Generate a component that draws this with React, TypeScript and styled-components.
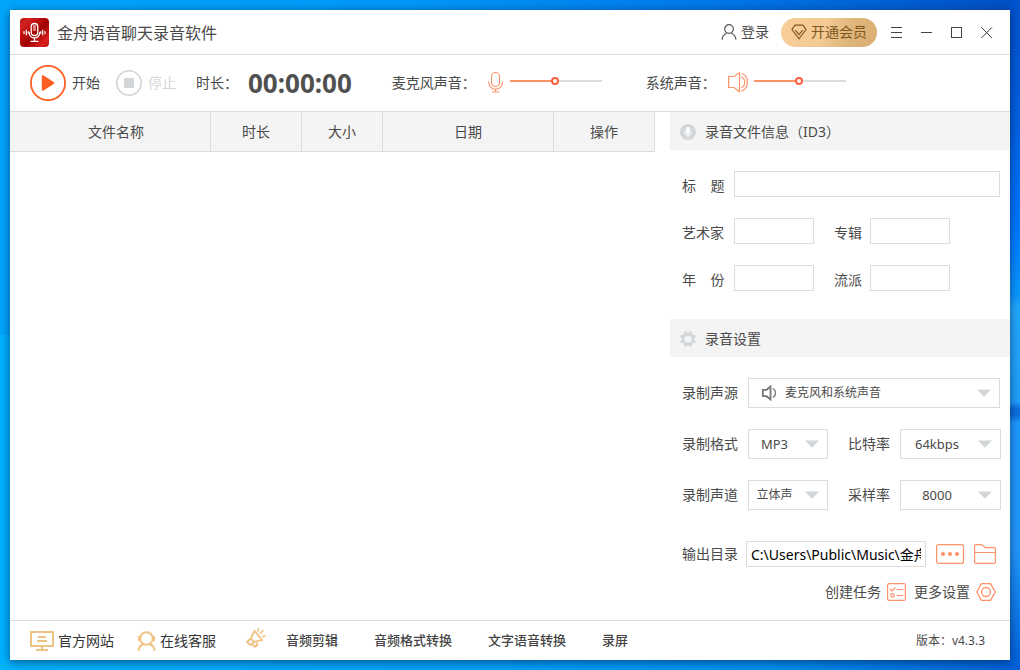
import React, { useState } from 'react';
import styled, { createGlobalStyle } from 'styled-components';

const color = {
  text: '#4a4a4a',
  line: '#dcdcdc',
  panel: '#f4f4f4',
  orange: '#ff9169',
  strong: '#ff6022',
  muted: '#d2d6d9',
  gold: '#edc283',
};

const GlobalStyle = createGlobalStyle`
  *, *::before, *::after { box-sizing: border-box; }
  body {
    margin: 0;
    color: ${color.text};
    font: 14px/20px "Noto Sans", "Noto Sans CJK SC", sans-serif;
  }
  button, input, select { font: inherit; color: inherit; }
  svg { display: block; flex: none; }
`;

const Desktop = styled.div`
  min-height: 100vh;
  padding: 10px;
  display: flex;
  flex-direction: column;
  background:
    linear-gradient(180deg, #0052cc 0, #0060e0 18%, #0078ff 34%, #0a98ff 44%, #22a8fb 46%, #209ffa 60%, #0a6fdc 61%, #0a6fdc 62%, #1e98ff 63%, #2197fb 82%, #0060d8 100%) right / 10px 100% no-repeat,
    linear-gradient(90deg, #00a6fb 0, #0098f8 40%, #0078e8 70%, #004fc4 100%) top / 100% 50% no-repeat,
    linear-gradient(90deg, #00b2ff 0, #00a0f8 50%, #0090ee 75%, #0060d8 100%);
`;

const Window = styled.div`
  flex: 1;
  display: flex;
  flex-direction: column;
  background: #fff;
  box-shadow: 0 2px 9px rgba(0, 10, 50, 0.55);
`;

const TitleBar = styled.header`
  display: flex;
  align-items: center;
  height: 45px;
  padding: 0 8px 0 10px;
  border-bottom: 1px solid ${color.line};
`;

const AppTitle = styled.h1`
  flex: 1;
  margin: 0 0 0 8px;
  padding-top: 2px;
  font-size: 16px;
  line-height: 24px;
  font-weight: 400;
`;

const PlainButton = styled.button`
  display: flex;
  align-items: center;
  gap: 6px;
  padding: 0;
  border: 0;
  background: none;
  line-height: 20px;
  cursor: pointer;

  &:disabled {
    color: ${color.muted};
    cursor: default;
  }
`;

const LoginButton = styled(PlainButton)`
  gap: 4px;
  margin-right: 12px;
`;

const VipButton = styled(PlainButton)`
  gap: 4px;
  height: 29px;
  margin-right: 5px;
  padding: 0 10px;
  border-radius: 15px;
  color: #80571c;
  background: linear-gradient(110deg, #f8cf9b 0%, #f3ca94 45%, #deb57a 70%, #d9ae72 100%);
`;

const WindowButton = styled(PlainButton)`
  justify-content: center;
  width: 30px;
  height: 30px;
  padding-top: 2px;
`;

const Toolbar = styled.div`
  display: flex;
  align-items: center;
  height: 57px;
  padding: 0 20px;
  border-bottom: 1px solid ${color.line};
`;

const Transport = styled.div`
  display: flex;
  gap: 16px;
`;

const Duration = styled.div`
  display: flex;
  align-items: center;
  gap: 10px;
  margin: 0 40px 0 20px;
`;

const Clock = styled.time`
  font-size: 26px;
  line-height: 36px;
  font-weight: 700;
  color: #505050;
`;

const Volume = styled.label`
  display: flex;
  align-items: center;
  gap: 6px;
  margin-right: 44px;
`;

const VolumeName = styled.span`
  margin-right: 6px;
`;

const Slider = styled.input<{ $value: number }>`
  appearance: none;
  width: 92px;
  height: 8px;
  margin: 0 0 4px;
  background: linear-gradient(90deg, ${color.orange} ${p => p.$value}%, ${color.line} ${p => p.$value}%) center / 100% 2px no-repeat;

  &::-webkit-slider-thumb {
    appearance: none;
    width: 8px;
    height: 8px;
    border: 2px solid #ff5f3c;
    border-radius: 50%;
    background: #fff;
  }
`;

const Content = styled.main`
  flex: 1;
  display: grid;
  grid-template-columns: 1fr 340px;
  gap: 15px;
  align-items: start;
`;

const FileTable = styled.table`
  width: 100%;
  table-layout: fixed;
  border-spacing: 0;
`;

const HeadCell = styled.th<{ $width?: number }>`
  width: ${p => (p.$width ? `${p.$width}px` : 'auto')};
  height: 40px;
  padding: 0 0 0 ${p => (p.$width ? 0 : 12)}px;
  font-weight: 400;
  background: ${color.panel};
  border-right: 1px solid ${color.line};
  border-bottom: 1px solid ${color.line};
`;

const SectionTitle = styled.h2`
  display: flex;
  align-items: center;
  gap: 9px;
  height: 38px;
  margin: 0;
  padding: 2px 0 0 10px;
  font-size: 14px;
  font-weight: 400;
  background: ${color.panel};
`;

const Fields = styled.div<{ $bottom: number }>`
  display: flex;
  flex-direction: column;
  gap: 21px;
  padding: 21px 10px ${p => p.$bottom}px 12px;
`;

const Row = styled.div`
  display: flex;
  align-items: center;
  gap: 20px;
`;

const TagField = styled.label<{ $grow?: boolean }>`
  display: flex;
  align-items: center;
  flex: ${p => (p.$grow ? 1 : 'none')};
  gap: 8px;
`;

const TagName = styled.span<{ $wide?: boolean }>`
  width: ${p => (p.$wide ? '44px' : 'auto')};
  padding-top: 3px;
  white-space: nowrap;
`;

const TextInput = styled.input<{ $grow?: boolean }>`
  flex: ${p => (p.$grow ? 1 : 'none')};
  min-width: 0;
  width: 80px;
  height: 26px;
  padding: 0 4px;
  border: 1px solid ${color.line};
  background: #fff;
`;

const OptionField = styled.label<{ $grow?: boolean }>`
  display: flex;
  align-items: center;
  flex: ${p => (p.$grow ? 1 : 'none')};
  gap: 10px;
`;

const SelectBox = styled.span<{ $width?: number }>`
  display: grid;
  align-items: center;
  flex: ${p => (p.$width ? 'none' : 1)};
  width: ${p => (p.$width ? `${p.$width}px` : 'auto')};

  > * { grid-area: 1 / 1; }
  > svg { pointer-events: none; justify-self: end; margin-right: 9px; }
  > svg:first-of-type:not(:last-of-type) { justify-self: start; margin-left: 13px; }
`;

const Select = styled.select<{ $size: number; $icon?: boolean }>`
  appearance: none;
  width: 100%;
  height: 30px;
  padding: ${p => (p.$icon ? '0 27px 0 36px' : '0 27px 0 0')};
  border: 1px solid ${color.line};
  border-radius: 0;
  background: #fff;
  font-size: ${p => p.$size}px;
  text-align-last: ${p => (p.$icon ? 'left' : 'center')};
`;

const PathRow = styled.div`
  display: flex;
  align-items: center;
  gap: 10px;
  margin-top: 10px;
  padding-right: 4px;
`;

const PathField = styled.label`
  display: flex;
  align-items: center;
  gap: 8px;
  flex: 1;
`;

const PathInput = styled(TextInput)`
  color: #000;
`;

const ActionRow = styled.div`
  display: flex;
  justify-content: flex-end;
  gap: 8px;
  margin-top: -6px;
  padding-right: 4px;
`;

const Footer = styled.footer`
  display: flex;
  align-items: center;
  height: 40px;
  padding: 0 25px 0 20px;
  border-top: 1px solid ${color.line};
`;

const FooterLink = styled.a`
  display: flex;
  align-items: center;
  gap: 4px;
  margin-right: 23px;
  color: #333;
  text-decoration: none;
`;

const ToolNav = styled.nav`
  display: flex;
  align-items: center;
  gap: 36px;
`;

const ToolLink = styled.a`
  padding-bottom: 1px;
  color: #444;
  font-size: 13px;
  font-weight: 500;
  text-decoration: none;
`;

const MegaphoneSlot = styled.span`
  margin: 0 20px 5px 7px;
`;

const Version = styled.span`
  margin-left: auto;
  padding-top: 1px;
  font-size: 12px;
`;

const Logo = () => (
  <svg width="29" height="29" viewBox="0 0 29 29" aria-hidden="true">
    <defs>
      <linearGradient id="logoRed" x1="0" y1="0" x2="1" y2="1">
        <stop offset="0" stopColor="#b01010" />
        <stop offset="0.15" stopColor="#d42222" />
        <stop offset="0.4" stopColor="#b80a0a" />
        <stop offset="0.55" stopColor="#a00303" />
        <stop offset="0.85" stopColor="#dc2020" />
        <stop offset="1" stopColor="#b80c0c" />
      </linearGradient>
    </defs>
    <rect width="29" height="29" rx="4" fill="url(#logoRed)" />
    <g fill="none" stroke="#fff" strokeLinecap="round">
      <rect x="11.2" y="5.5" width="6.6" height="12" rx="3.3" strokeWidth="1.3" />
      <path d="M13.4 8h2.2M13.4 10h2.2M13.4 12h2.2" strokeWidth="1" />
      <path d="M9.2 14.5c0 7.2 10.6 7.2 10.6 0M14.5 20v3M11 23.3h7" strokeWidth="1.3" />
      <path d="M4 13.6v2M6.3 12v5M8.2 13.7v1.6M20.8 13.7v1.6M22.7 12v5M25 13.6v2" strokeWidth="1.2" />
    </g>
  </svg>
);

const UserIcon = () => (
  <svg width="16" height="16" viewBox="0 0 16 16" fill="none" stroke="#555" strokeWidth="1.2" aria-hidden="true">
    <circle cx="8" cy="5" r="4.3" />
    <path d="M1 15.6c.3-3.400 2.200-5.300 4.600-6.400M15 15.600c-.3-3.400-2.200-5.300-4.600-6.400" />
  </svg>
);

const DiamondIcon = () => (
  <svg width="16" height="16" viewBox="0 0 16 16" fill="none" stroke="#80571c" strokeWidth="1.200" aria-hidden="true">
    <path d="M4 1.200h8l3 4.300L8 14.800 1 5.500z" />
    <path d="M4.300 6.200L8 10.600l3.700-4.400" />
  </svg>
);

const MenuIcon = () => (
  <svg width="12" height="12" viewBox="0 0 12 12" stroke="#444" aria-hidden="true">
    <path d="M0 .5h11M0 5.500h11M0 10.500h11" />
  </svg>
);

const MinimizeIcon = () => (
  <svg width="12" height="12" viewBox="0 0 12 12" stroke="#444" aria-hidden="true">
    <path d="M0 5.500h11" />
  </svg>
);

const MaximizeIcon = () => (
  <svg width="12" height="12" viewBox="0 0 12 12" fill="none" stroke="#444" aria-hidden="true">
    <rect x=".5" y=".5" width="10" height="10" />
  </svg>
);

const CloseIcon = () => (
  <svg width="12" height="12" viewBox="0 0 12 12" stroke="#444" aria-hidden="true">
    <path d="M.3.300l10.700 10.700M11 .3L.3 11" />
  </svg>
);

const PlayIcon = () => (
  <svg width="36" height="36" viewBox="0 0 36 36" aria-hidden="true">
    <circle cx="18" cy="18" r="17.1" fill="none" stroke={color.strong} strokeWidth="1.800" />
    <path d="M13 11.500l10 6.500-10 6.500z" fill={color.strong} stroke={color.strong} strokeWidth="2.400" strokeLinejoin="round" />
  </svg>
);

const StopIcon = () => (
  <svg width="26" height="26" viewBox="0 0 26 26" aria-hidden="true">
    <circle cx="13" cy="13" r="12.200" fill="none" stroke={color.muted} strokeWidth="1.600" />
    <rect x="8" y="8" width="10" height="10" fill={color.muted} />
  </svg>
);

const MicIcon = () => (
  <svg width="16" height="22" viewBox="0 0 16 22" fill="none" stroke={color.orange} strokeWidth="1.100" aria-hidden="true">
    <rect x="3.500" y=".5" width="8" height="14" rx="4" />
    <path d="M.6 9.500c0 10.500 14 10.500 14 0M7.500 17.500v2.500M4 20h7.500" />
  </svg>
);

const SpeakerIcon = () => (
  <svg width="20" height="22" viewBox="0 0 20 22" fill="none" stroke={color.orange} strokeWidth="1.200" aria-hidden="true">
    <path d="M.6 4.500h5.400l5.500-3.700v19L6 15.500H.6z" />
    <path d="M13.300 4.800c4.600 2 4.600 9 0 11M13.700 1.500c7.600 2.300 7.600 15.300 0 17.600" />
  </svg>
);

const MicBadge = () => (
  <svg width="16" height="16" viewBox="0 0 16 16" aria-hidden="true">
    <circle cx="8" cy="8" r="8" fill={color.muted} />
    <rect x="5.800" y="3" width="4.400" height="7.200" rx="2.200" fill="#fff" />
    <path d="M4.300 7.800c0 5 7.400 5 7.400 0M8 11.500v1.500" fill="none" stroke="#fff" />
  </svg>
);

const GearIcon = () => (
  <svg width="16" height="16" viewBox="0 0 16 16" aria-hidden="true">
    <circle cx="8" cy="8" r="4.900" fill="none" stroke={color.muted} strokeWidth="2.600" />
    {[22.5, 67.5, 112.5, 157.5].map(angle => (
      <path
        key={angle}
        d="M6.500 0h3v2.800h-3zM6.500 13.200h3V16h-3z"
        fill={color.muted}
        transform={`rotate(${angle} 8 8)`}
      />
    ))}
  </svg>
);

const SourceIcon = () => (
  <svg width="16" height="16" viewBox="0 0 16 16" fill="none" stroke="#777" aria-hidden="true">
    <path d="M1.800 4.800h3.700l4-3.300v13l-4-3.300H1.800z" strokeWidth="1.800" />
    <path d="M11.800 3.500c3.600 1.500 3.600 7.500 0 9" strokeWidth="1.200" />
  </svg>
);

const ArrowIcon = () => (
  <svg width="14" height="8" viewBox="0 0 14 8" aria-hidden="true">
    <path d="M0 0.500h14L7 7.800z" fill={color.muted} />
  </svg>
);

const DotsIcon = () => (
  <svg width="28" height="20" viewBox="0 0 28 20" aria-hidden="true">
    <rect x=".6" y=".6" width="26.800" height="18.800" rx="2" fill="none" stroke={color.orange} strokeWidth="1.200" />
    <circle cx="7" cy="10" r="2" fill={color.orange} />
    <circle cx="14" cy="10" r="2" fill={color.orange} />
    <circle cx="21" cy="10" r="2" fill={color.orange} />
  </svg>
);

const FolderIcon = () => (
  <svg width="22" height="20" viewBox="0 0 22 20" fill="none" stroke={color.orange} strokeWidth="1.200" aria-hidden="true">
    <path d="M2 .6h5.500l4 3h8.500q1.400 0 1.400 1.400v13q0 1.400-1.400 1.400H2Q.6 19.400.6 18V2Q.6.600 2 .6zM.6 8.500h20.800" />
  </svg>
);

const TaskIcon = () => (
  <svg width="19" height="18" viewBox="0 0 19 18" fill="none" stroke={color.orange} strokeWidth="1.200" aria-hidden="true">
    <rect x=".6" y=".6" width="17.800" height="16.800" rx="1.500" />
    <path d="M3 6l2 2 3.500-3.500M9.500 6.500H16M9.500 12.500H16" />
    <circle cx="5.500" cy="12.500" r="1.800" />
  </svg>
);

const HexIcon = () => (
  <svg width="20" height="18" viewBox="0 0 20 18" fill="none" stroke={color.orange} strokeWidth="1.300" aria-hidden="true">
    <path d="M5.500.7h9L19.300 9l-4.800 8.300h-9L.7 9z" strokeLinejoin="round" />
    <circle cx="10" cy="9" r="4.500" />
  </svg>
);

const MonitorIcon = () => (
  <svg width="24" height="20" viewBox="0 0 24 20" fill="none" stroke={color.gold} strokeWidth="2" aria-hidden="true">
    <path d="M1 1h22v14H1zM12 15v4M6 19h12M8 6h8M7 10h10" />
  </svg>
);

const ServiceIcon = () => (
  <svg width="19" height="20" viewBox="0 0 19 20" fill="none" stroke={color.gold} strokeWidth="2" aria-hidden="true">
    <circle cx="9.500" cy="7.500" r="6.300" />
    <path d="M1.500 20c0-3.600 2.200-6 5-7M17.500 20c0-3.600-2.200-6-5-7M2 5v5M17 5v5" />
  </svg>
);

const MegaphoneIcon = () => (
  <svg width="20" height="20" viewBox="0 0 20 20" fill="none" stroke={color.gold} strokeWidth="1.800" strokeLinejoin="round" aria-hidden="true">
    <path d="M8.500 2.800l7.500 9.400-8 1.600-3.500 3.400L1 14l3.800-3.500zM4.800 10.500l3.200 3.300M6.500 16.500l2.700 2.300 2-1.500-.6-4" />
    <path d="M11.800 3.800l.7-3.600M14 6l3.500-4M16 8.800l3.600-.8" strokeWidth="1.600" />
  </svg>
);

type OptionProps = { name: string; value: string; size: number; width?: number; icon?: React.ReactNode };

const Option = ({ name, value, size, width, icon }: OptionProps) => (
  <OptionField $grow={!width}>
    {name}
    <SelectBox $width={width}>
      <Select $size={size} $icon={!!icon} defaultValue={value}>
        <option>{value}</option>
      </Select>
      {icon}
      <ArrowIcon />
    </SelectBox>
  </OptionField>
);

const VolumeControl = ({ name, icon }: { name: string; icon: React.ReactNode }) => {
  const [value, setValue] = useState(49);
  return (
    <Volume>
      <VolumeName>{name}</VolumeName>
      {icon}
      <Slider type="range" value={value} $value={value} onChange={e => setValue(Number(e.target.value))} />
    </Volume>
  );
};

const columns = [
  { name: '文件名称' },
  { name: '时长', width: 91 },
  { name: '大小', width: 81 },
  { name: '日期', width: 171 },
  { name: '操作', width: 101 },
];

export default function App() {
  return (
    <>
      <GlobalStyle />
      <Desktop>
        <Window>
          <TitleBar>
            <Logo />
            <AppTitle>金舟语音聊天录音软件</AppTitle>
            <LoginButton><UserIcon />登录</LoginButton>
            <VipButton><DiamondIcon />开通会员</VipButton>
            <WindowButton aria-label="菜单"><MenuIcon /></WindowButton>
            <WindowButton aria-label="最小化"><MinimizeIcon /></WindowButton>
            <WindowButton aria-label="最大化"><MaximizeIcon /></WindowButton>
            <WindowButton aria-label="关闭"><CloseIcon /></WindowButton>
          </TitleBar>

          <Toolbar>
            <Transport>
              <PlainButton><PlayIcon />开始</PlainButton>
              <PlainButton disabled><StopIcon />停止</PlainButton>
            </Transport>
            <Duration>时长：<Clock>00:00:00</Clock></Duration>
            <VolumeControl name="麦克风声音：" icon={<MicIcon />} />
            <VolumeControl name="系统声音：" icon={<SpeakerIcon />} />
          </Toolbar>

          <Content>
            <FileTable>
              <thead>
                <tr>
                  {columns.map(c => (
                    <HeadCell key={c.name} $width={c.width} scope="col">{c.name}</HeadCell>
                  ))}
                </tr>
              </thead>
            </FileTable>

            <aside>
              <SectionTitle><MicBadge />录音文件信息（ID3）</SectionTitle>
              <Fields $bottom={28}>
                <TagField $grow>
                  <TagName $wide>标&nbsp;&nbsp;&nbsp;&nbsp;题</TagName>
                  <TextInput $grow />
                </TagField>
                <Row>
                  <TagField><TagName $wide>艺术家</TagName><TextInput /></TagField>
                  <TagField><TagName>专辑</TagName><TextInput /></TagField>
                </Row>
                <Row>
                  <TagField><TagName $wide>年&nbsp;&nbsp;&nbsp;&nbsp;份</TagName><TextInput /></TagField>
                  <TagField><TagName>流派</TagName><TextInput /></TagField>
                </Row>
              </Fields>

              <SectionTitle><GearIcon />录音设置</SectionTitle>
              <Fields $bottom={16}>
                <Option name="录制声源" value="麦克风和系统声音" size={12} icon={<SourceIcon />} />
                <Row>
                  <Option name="录制格式" value="MP3" size={13} width={80} />
                  <Option name="比特率" value="64kbps" size={13} width={101} />
                </Row>
                <Row>
                  <Option name="录制声道" value="立体声" size={12} width={80} />
                  <Option name="采样率" value="8000" size={13} width={101} />
                </Row>
                <PathRow>
                  <PathField>
                    输出目录
                    <PathInput $grow defaultValue="C:\Users\Public\Music\金舟语音聊天录音软件" />
                  </PathField>
                  <PlainButton aria-label="更改目录"><DotsIcon /></PlainButton>
                  <PlainButton aria-label="打开目录"><FolderIcon /></PlainButton>
                </PathRow>
                <ActionRow>
                  <PlainButton>创建任务<TaskIcon /></PlainButton>
                  <PlainButton>更多设置<HexIcon /></PlainButton>
                </ActionRow>
              </Fields>
            </aside>
          </Content>

          <Footer>
            <FooterLink href="#site"><MonitorIcon />官方网站</FooterLink>
            <FooterLink href="#service"><ServiceIcon />在线客服</FooterLink>
            <MegaphoneSlot><MegaphoneIcon /></MegaphoneSlot>
            <ToolNav>
              <ToolLink href="#cut">音频剪辑</ToolLink>
              <ToolLink href="#convert">音频格式转换</ToolLink>
              <ToolLink href="#speech">文字语音转换</ToolLink>
              <ToolLink href="#screen">录屏</ToolLink>
            </ToolNav>
            <Version>版本：v4.3.3</Version>
          </Footer>
        </Window>
      </Desktop>
    </>
  );
}
